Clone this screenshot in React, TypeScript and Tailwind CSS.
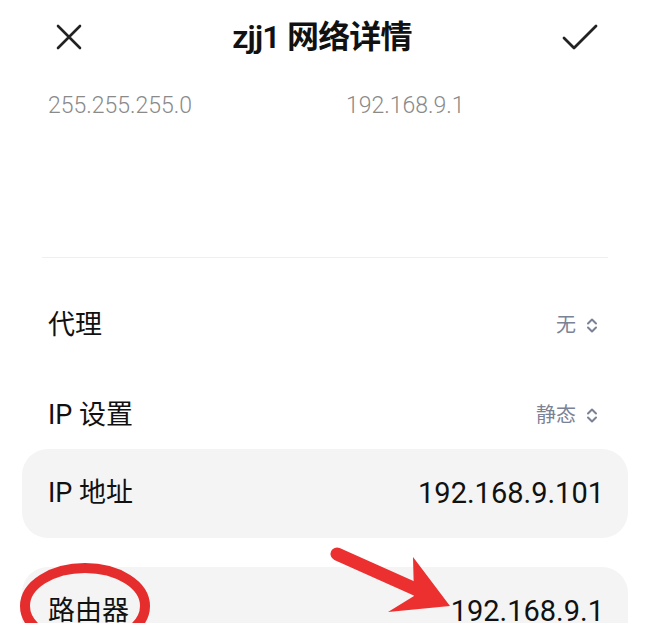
import React from 'react';

const font = { fontFamily: 'Roboto, "Noto Sans CJK SC", sans-serif' };

const UpDown = () => (
  <svg width="12" height="17" viewBox="0 0 12 17" fill="none" className="ml-[10px]">
    <path d="M2 6.5 6 2.5l4 4" stroke="#7b8296" strokeWidth="2" strokeLinecap="round" strokeLinejoin="round" />
    <path d="M2 10.5 6 14.5l4-4" stroke="#7b8296" strokeWidth="2" strokeLinecap="round" strokeLinejoin="round" />
  </svg>
);

const SelectRow = ({ label, value }: { label: string; value: string }) => (
  <div className="flex items-center justify-between pl-[48px] pr-[52px] h-[90px]">
    <span className="text-[27px] text-[#111]">{label}</span>
    <span className="flex items-center text-[20px] text-[#7b8296]">
      {value}
      <UpDown />
    </span>
  </div>
);

export default function App() {
  return (
    <div className="relative w-[650px] h-[623px] overflow-hidden bg-white" style={font}>
      {/* header */}
      <header className="flex items-center justify-between h-[74px] pl-[56px] pr-[52px]">
        <svg width="26" height="26" viewBox="0 0 26 26">
          <path d="M2 2 24 24M24 2 2 24" stroke="#222" strokeWidth="2.6" strokeLinecap="round" />
        </svg>
        <h1 className="text-[32px] font-semibold text-[#111] tracking-tight">zjj1 网络详情</h1>
        <svg width="36" height="28" viewBox="0 0 36 28">
          <path d="M2 15 12 25 34 3" stroke="#222" strokeWidth="2.8" fill="none" strokeLinecap="round" strokeLinejoin="round" />
        </svg>
      </header>

      <div className="flex items-center h-[64px] pl-[48px] text-[23px] font-light text-[#8a8a8a]">
        <span className="w-[298px]">255.255.255.0</span>
        <span>192.168.9.1</span>
      </div>

      <div className="mt-[119px] mx-[42px] h-px bg-[#efefef]" />

      <div className="mt-[22px]">
        <SelectRow label="代理" value="无" />
        <SelectRow label="IP 设置" value="静态" />
      </div>

      <div className="mx-[22px] mt-[-11px] h-[89px] rounded-[26px] bg-[#f4f4f4] flex items-center justify-between pl-[26px] pr-[24px]">
        <span className="text-[27px] text-[#111]">IP 地址</span>
        <span className="text-[29px] text-[#111]">192.168.9.101</span>
      </div>

      <div className="mx-[22px] mt-[29px] h-[89px] rounded-[26px] bg-[#f4f4f4] flex items-center justify-between pl-[26px] pr-[24px]">
        <span className="text-[27px] text-[#111]">路由器</span>
        <span className="text-[29px] text-[#111]">192.168.9.1</span>
      </div>

      {/* red annotation marks */}
      <svg className="absolute left-0 top-0 pointer-events-none" width="650" height="623" viewBox="0 0 650 623">
        <ellipse cx="85" cy="606" rx="60" ry="38" stroke="#e52d2d" strokeWidth="10" fill="none" />
        <path d="M337 554 422 592" stroke="#ec3030" strokeWidth="13" strokeLinecap="round" />
        <path d="M413 557 450 606 388 612 414 596Z" fill="#ec3030" />
      </svg>
    </div>
  );
}
